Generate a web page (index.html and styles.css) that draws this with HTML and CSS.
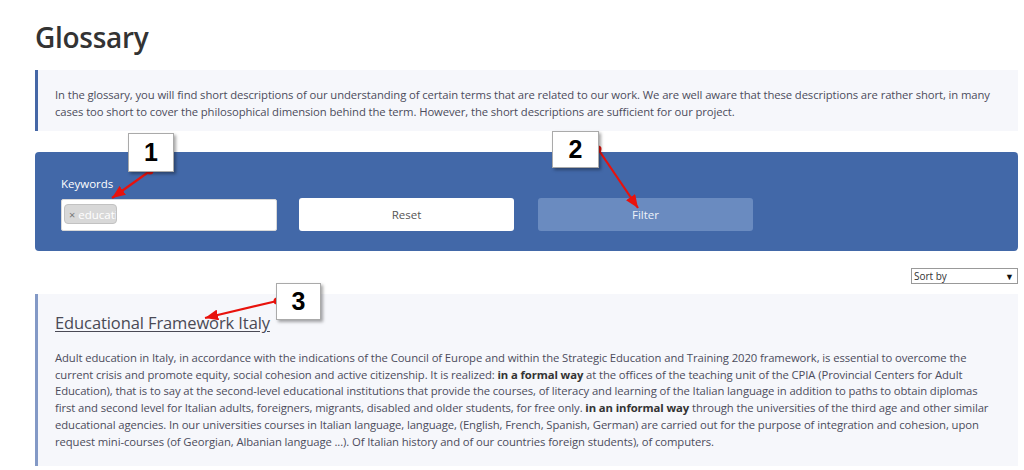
FILE: index.html
```html
<!DOCTYPE html>
<html lang="en">

<head>
    <meta charset="UTF-8">
    <meta name="viewport" content="width=device-width, initial-scale=1.0">
    <title>Glossary</title>
    <link rel="stylesheet" href="styles.css">
</head>

<body>
    <div class="page">
        <h1 class="page-title">Glossary</h1>

        <div class="intro">
            <p>In the glossary, you will find short descriptions of our understanding of certain terms that are related to our work. We are well aware that these descriptions are rather short, in many cases too short to cover the philosophical dimension behind the term. However, the short descriptions are sufficient for our project.</p>
        </div>

        <form class="filter-panel">
            <div class="filter-field">
                <label class="filter-label">Keywords</label>
                <div class="tag-input">
                    <span class="tag"><span class="tag-remove">&times;</span>educati</span>
                </div>
            </div>
            <button type="reset" class="btn btn-reset">Reset</button>
            <button type="submit" class="btn btn-filter">Filter</button>
        </form>

        <div class="sort-row">
            <div class="sort-select">
                <span>Sort by</span>
                <span class="sort-caret">&#9660;</span>
            </div>
        </div>

        <div class="entry">
            <a class="entry-title" href="#">Educational Framework Italy</a>
            <p class="entry-text">Adult education in Italy, in accordance with the indications of the Council of Europe and within the Strategic Education and Training 2020 framework, is essential to overcome the current crisis and promote equity, social cohesion and active citizenship. It is realized: <b>in a formal way</b> at the offices of the teaching unit of the CPIA (Provincial Centers for Adult Education), that is to say at the second-level educational institutions that provide the courses, of literacy and learning of the Italian language in addition to paths to obtain diplomas first and second level for Italian adults, foreigners, migrants, disabled and older students, for free only. <b>in an informal way</b> through the universities of the third age and other similar educational agencies. In our universities courses in Italian language, language, (English, French, Spanish, German) are carried out for the purpose of integration and cohesion, upon request mini-courses (of Georgian, Albanian language ...). Of Italian history and of our countries foreign students), of computers.</p>
        </div>
    </div>

    <!-- numbered callouts -->
    <svg class="arrows" width="1024" height="470" viewBox="0 0 1024 470">
        <defs>
            <marker id="head" markerWidth="6" markerHeight="5" refX="6" refY="2.5" orient="auto" markerUnits="strokeWidth">
                <path d="M0,0 L6,2.5 L0,5 z" fill="#e8120c" />
            </marker>
        </defs>
        <g stroke="#e8120c" stroke-width="2.2" fill="none">
            <line x1="150" y1="171" x2="112" y2="198" marker-end="url(#head)" />
            <line x1="598" y1="149" x2="638" y2="208" marker-end="url(#head)" />
            <line x1="277" y1="301" x2="205" y2="318" marker-end="url(#head)" />
        </g>
        <g fill="#e8120c">
            <circle cx="150" cy="171" r="3.5" />
            <circle cx="598" cy="149" r="3.5" />
            <circle cx="277" cy="301" r="3.5" />
        </g>
    </svg>
    <div class="callout callout-1">1</div>
    <div class="callout callout-2">2</div>
    <div class="callout callout-3">3</div>
</body>

</html>
```

FILE: styles.css
```css
body {
    margin: 0;
    font-family: "Open Sans", "Noto Sans", sans-serif;
    background-color: #fff;
    color: #4c4c5c;
}

.page {
    width: 983px;
    padding: 18px 0 0 35px;
}

.page-title {
    margin: 0 0 14px;
    font-size: 28px;
    font-weight: 600;
    color: #333;
    letter-spacing: -0.3px;
}

.intro {
    background-color: #f6f7fb;
    border-left: 3px solid #4567a6;
    padding: 16px 25px 11px 17px;
}

.intro p {
    margin: 0;
    font-size: 11.3px;
    letter-spacing: -0.1px;
    line-height: 17px;
}

.filter-panel {
    display: flex;
    align-items: flex-end;
    margin-top: 21px;
    height: 99px;
    box-sizing: border-box;
    padding: 0 26px 20px;
    background-color: #4268a8;
    border-radius: 4px;
}

.filter-field {
    display: flex;
    flex-direction: column;
    margin-right: 22px;
}

.filter-label {
    color: #fff;
    font-size: 11.5px;
    line-height: 14px;
    margin-bottom: 8px;
}

.tag-input {
    width: 216px;
    height: 32px;
    box-sizing: border-box;
    background: #fff;
    border: 1px solid #d8d8d8;
    border-radius: 2px;
    padding: 4px 0 0 2px;
    display: flex;
    align-items: flex-start;
}

.tag {
    display: inline-flex;
    align-items: center;
    width: 53px;
    height: 20px;
    overflow: hidden;
    white-space: nowrap;
    background: #d8d8d8;
    border: 1px solid #c2c2c2;
    border-radius: 4px;
    color: #fff;
    font-size: 11.5px;
    padding-left: 4px;
    box-sizing: border-box;
}

.tag-remove {
    color: #777;
    font-size: 11px;
    margin-right: 3px;
}

.btn {
    width: 215px;
    height: 33px;
    border: none;
    border-radius: 3px;
    font-family: inherit;
    font-size: 11.5px;
    cursor: pointer;
}

.btn-reset {
    background: #fff;
    color: #555;
    margin-right: 24px;
}

.btn-filter {
    background: #6a8bc0;
    color: #eef2f9;
}

.sort-row {
    display: flex;
    justify-content: flex-end;
    margin-top: 17px;
    margin-bottom: 10px;
}

.sort-select {
    width: 107px;
    height: 16px;
    box-sizing: border-box;
    border: 1px solid #999;
    display: flex;
    justify-content: space-between;
    align-items: center;
    padding: 0 3px 0 2px;
    font-size: 10px;
    color: #333;
}

.sort-caret {
    font-size: 9px;
    color: #111;
}

.entry {
    background-color: #f6f7fb;
    border-left: 3px solid #8399c6;
    padding: 17px 25px 16px 17px;
}

.entry-title {
    display: inline-block;
    color: #4a4a55;
    font-size: 16.5px;
    letter-spacing: -0.1px;
    text-decoration: underline;
    text-underline-offset: 2px;
    margin-bottom: 16px;
}

.entry-text {
    margin: 0;
    font-size: 11.3px;
    letter-spacing: -0.1px;
    line-height: 16.7px;
}

.entry-text b {
    color: #333;
}

.arrows {
    position: absolute;
    left: 0;
    top: 0;
    pointer-events: none;
}

.callout {
    position: absolute;
    width: 45px;
    height: 37px;
    box-sizing: border-box;
    background: #fff;
    border: 1px solid #aaa;
    box-shadow: 2px 2px 3px rgba(0, 0, 0, 0.35);
    display: flex;
    justify-content: center;
    align-items: center;
    font-family: "Liberation Sans", Arial, sans-serif;
    font-weight: bold;
    font-size: 25px;
    color: #000;
}

.callout-1 {
    left: 128px;
    top: 133px;
    width: 46px;
    height: 39px;
}

.callout-2 {
    left: 552px;
    top: 131px;
    width: 47px;
}

.callout-3 {
    left: 276px;
    top: 283px;
}
```
